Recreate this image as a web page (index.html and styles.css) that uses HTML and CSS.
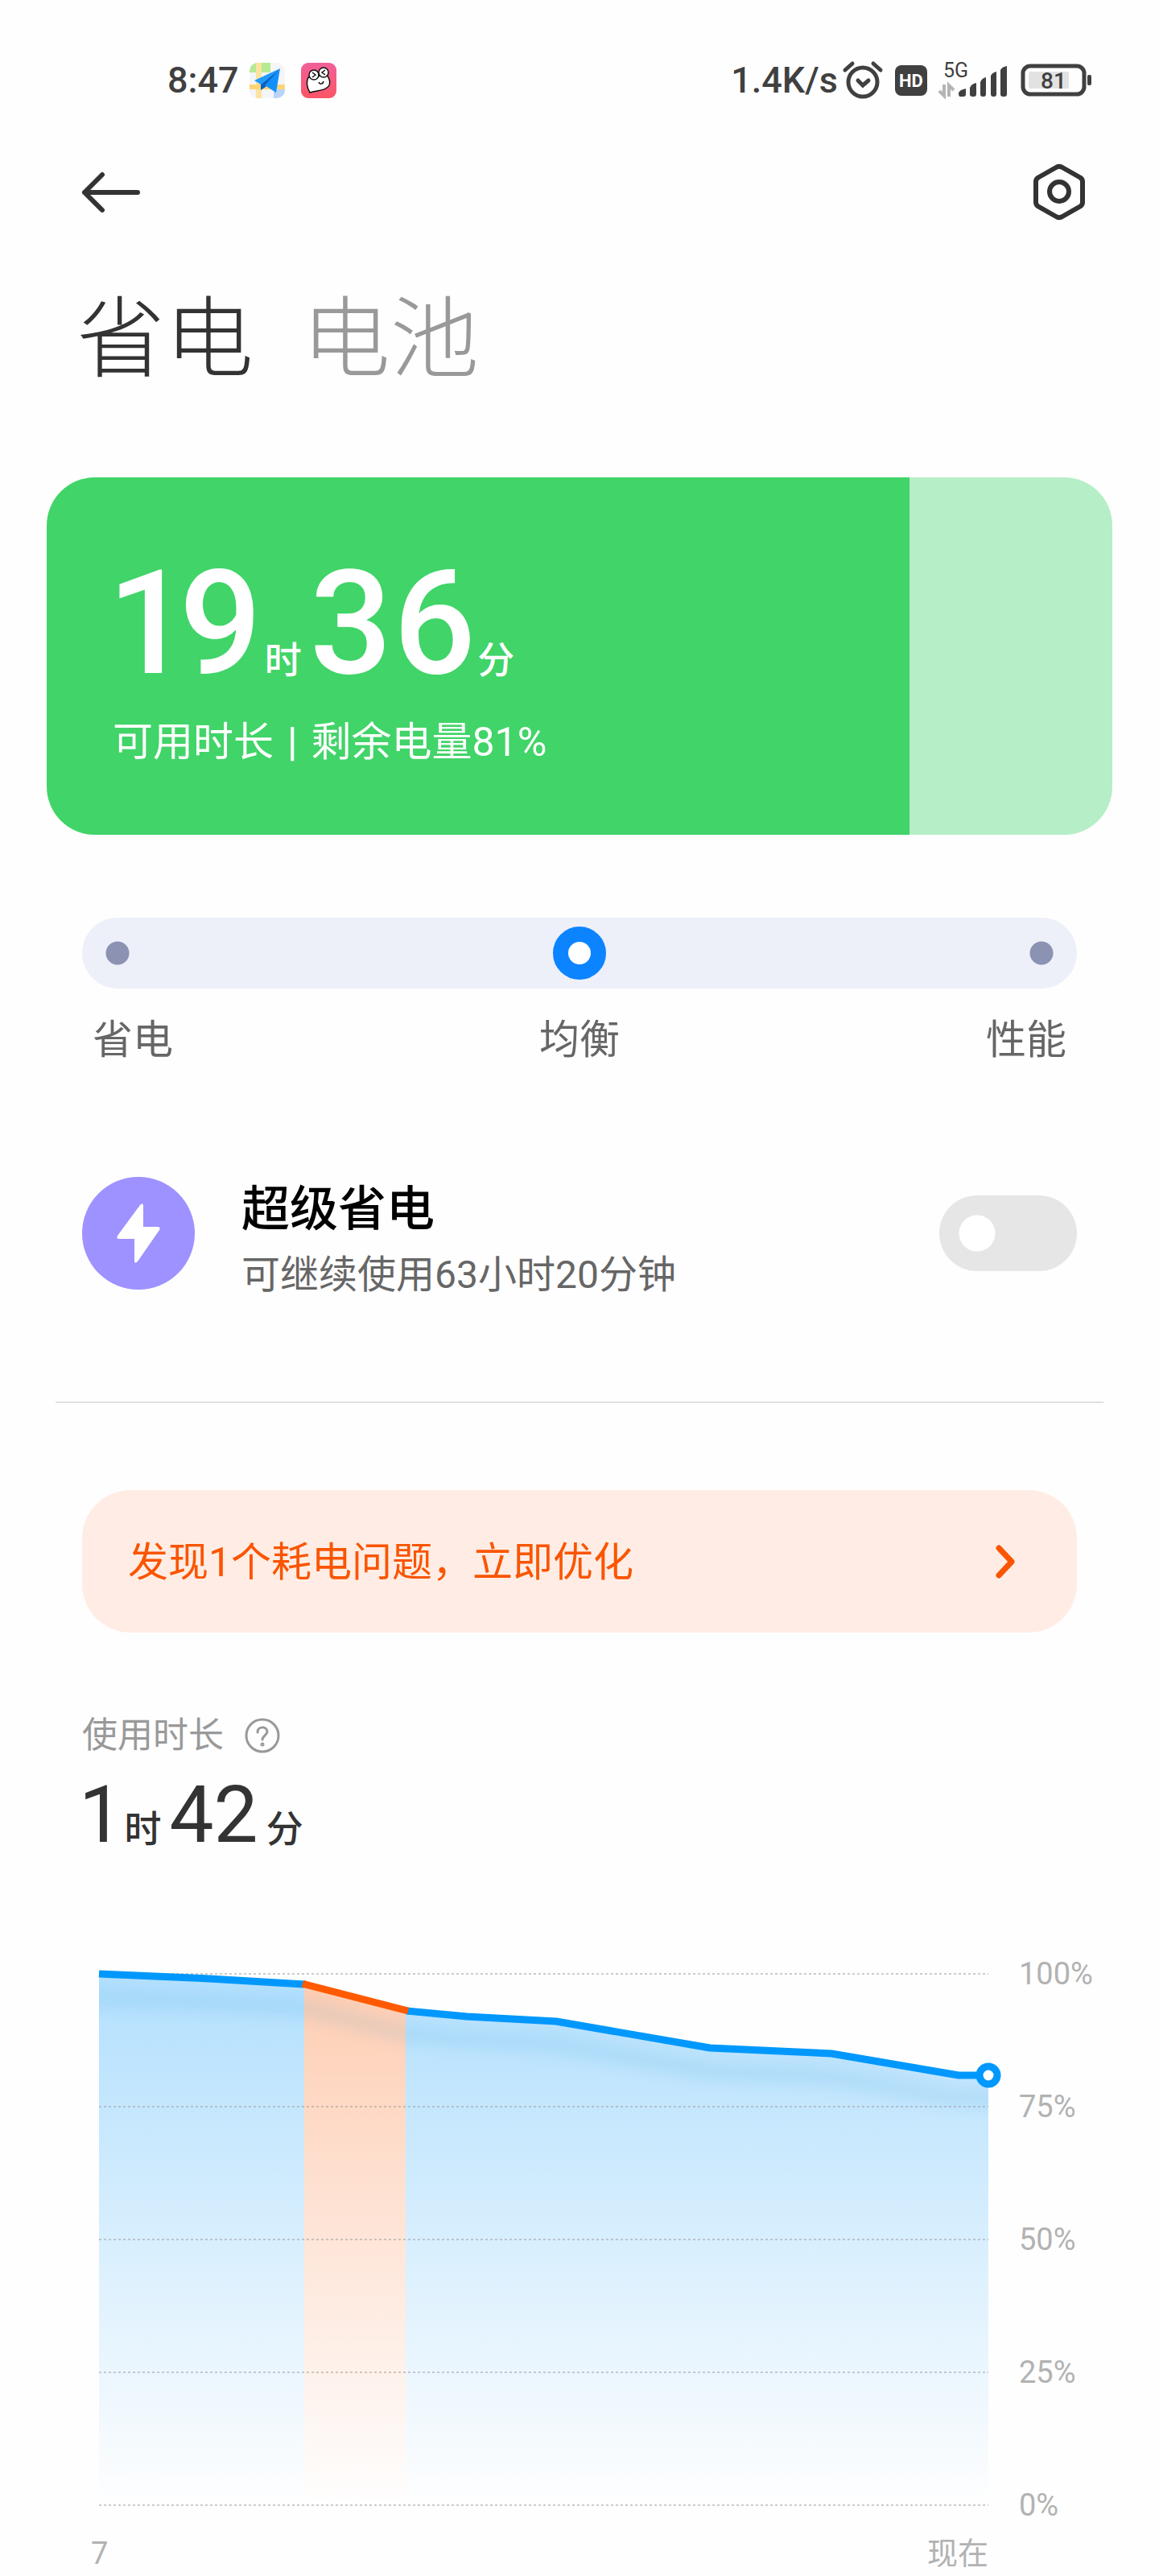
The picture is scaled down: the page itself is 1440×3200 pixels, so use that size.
FILE: index.html
```html
<!DOCTYPE html>
<html lang="zh-CN">
<head>
  <meta charset="UTF-8">
  <meta name="viewport" content="width=device-width, initial-scale=1.0">
  <title>省电</title>
  <link rel="stylesheet" href="styles.css">
</head>
<body>
  <!-- Status bar -->
  <div class="status-bar">
    <div class="status-left">
      <span class="status-text">8:47</span>
      <svg class="app-icon" width="44" height="44" viewBox="0 0 44 44">
        <defs><clipPath id="map-clip"><rect width="44" height="44" rx="10"/></clipPath></defs>
        <g clip-path="url(#map-clip)">
          <rect width="44" height="44" fill="#f4f5f6"/>
          <rect width="26" height="12" fill="#b6ea95"/>
          <path d="M30 44V35q6-3 14-3v12z" fill="#b9d3fb"/>
          <path d="M8 0h7v44H8z" fill="#fde2a0"/>
          <path d="M0 27h44v6H0z" fill="#fdd673"/>
        </g>
        <path d="M38 7L6 22l8 5z" fill="#1e9bff"/>
        <path d="M38 7L14 27v7l6-4z" fill="#0a5fc4"/>
        <path d="M38 7L19 28l14 9z" fill="#1190fb"/>
      </svg>
      <svg class="app-icon" width="44" height="44" viewBox="0 0 44 44">
        <defs>
          <linearGradient id="pink" x1="0" y1="0" x2="0" y2="1">
            <stop offset="0" stop-color="#f0609a"/>
            <stop offset="1" stop-color="#fb5566"/>
          </linearGradient>
        </defs>
        <rect width="44" height="44" rx="9" fill="url(#pink)"/>
        <path d="M9 18C6 25 8 32 11 37c9-3 20-2 24-9 2-5 0-9-3-13z" fill="#fff" stroke="#111" stroke-width="1.5"/>
        <circle cx="16" cy="15" r="6" fill="#fff" stroke="#111" stroke-width="1.5"/>
        <circle cx="28" cy="12" r="6" fill="#fff" stroke="#111" stroke-width="1.5"/>
        <path d="M14 12l4 3-4 3M30 9l-4 3 4 3M22 24c1 3 5 3 6-1" fill="none" stroke="#111" stroke-width="1.5"/>
      </svg>
    </div>
    <div class="status-right">
      <span class="status-text">1.4K/s</span>
      <svg class="alarm" width="50" height="48" viewBox="0 0 50 48" fill="none" stroke="#404040">
        <circle cx="25" cy="26" r="18" stroke-width="5"/>
        <path d="M19 24l6 6 7-6" stroke-width="5" stroke-linecap="round"/>
        <path d="M3 11l9-8M38 3l9 8" stroke-width="5" stroke-linecap="round"/>
      </svg>
      <svg class="hd" width="40" height="38" viewBox="0 0 40 38">
        <rect width="40" height="38" rx="8" fill="#404040"/>
        <text x="20" y="27" class="hd-text">HD</text>
      </svg>
      <svg class="signal" width="84" height="48" viewBox="0 0 84 48">
        <text x="5" y="20" class="net-text">5G</text>
        <path d="M6 29v14L0 37M12 44V30l6 6" fill="none" stroke="#b5b5b5" stroke-width="4"/>
        <g fill="#404040">
          <path d="M24 40q0-4 9-6v7q0 3-3 3h-4q-2 0-2-4z"/>
          <path d="M38 33q2-5 8-6v14q0 3-3 3h-2q-3 0-3-3z"/>
          <path d="M51 26q2-5 7-6v21q0 3-3 3h-1q-3 0-3-3z"/>
          <path d="M64 18q2-4 7-5v28q0 3-3 3h-1q-3 0-3-3z"/>
          <path d="M76 11q2-4 8-5v35q0 3-3 3h-2q-3 0-3-3z"/>
        </g>
      </svg>
      <svg class="battery" width="88" height="40" viewBox="0 0 88 40">
        <rect x="2" y="2" width="76" height="35" rx="9" fill="none" stroke="#404040" stroke-width="5"/>
        <rect x="9" y="9" width="50" height="21" rx="2" fill="#e2e2e2"/>
        <rect x="82" y="13" width="5" height="13" rx="2" fill="#404040"/>
        <text x="40" y="30" class="battery-text">81</text>
      </svg>
    </div>
  </div>

  <header class="toolbar">
    <button class="icon-btn" type="button" aria-label="返回">
      <svg width="72" height="72" viewBox="0 0 72 72" fill="none" stroke="#333" stroke-width="6" stroke-linecap="round" stroke-linejoin="round">
        <path d="M70 37H4M26 15L4 37l22 22"/>
      </svg>
    </button>
    <button class="icon-btn" type="button" aria-label="设置">
      <svg width="64" height="72" viewBox="0 0 64 72" fill="none" stroke="#333" stroke-width="6" stroke-linejoin="round">
        <path d="M29 5.500q3-1.500 6 0l23 13q3 2 3 5v26q0 3-3 5l-23 13q-3 1.500-6 0l-23-13q-3-2-3-5v-26q0-3 3-5z"/>
        <circle cx="32" cy="36" r="12"/>
      </svg>
    </button>
  </header>

  <nav class="tabs">
    <a href="#" class="tab active">省电</a>
    <a href="#" class="tab">电池</a>
  </nav>

  <main>
    <!-- Remaining time -->
    <section class="battery-card">
      <p class="duration duration-large">19<span>时</span>36<span>分</span></p>
      <p class="battery-info">可用时长<span class="bar">|</span>剩余电量81%</p>
    </section>

    <!-- Power mode -->
    <section class="mode">
      <input type="range" class="mode-slider" min="0" max="2" value="1" aria-label="性能模式">
      <div class="mode-labels">
        <span>省电</span>
        <span>均衡</span>
        <span>性能</span>
      </div>
    </section>

    <!-- Ultra saver -->
    <section class="saver">
      <svg class="saver-icon" width="140" height="140" viewBox="0 0 140 140">
        <circle cx="70" cy="70" r="70" fill="#9d92ff"/>
        <path d="M72 35q4-4 4 1v26h18q4 0 2 4L69 105q-4 4-4-1V77H46q-4 0-2-4z" fill="#fff"/>
      </svg>
      <label class="saver-text" for="saver-toggle">
        <strong>超级省电</strong>
        <span>可继续使用63小时20分钟</span>
      </label>
      <input type="checkbox" class="toggle" id="saver-toggle">
    </section>

    <hr class="divider">

    <a href="#" class="alert">
      <span>发现1个耗电问题，立即优化</span>
      <svg width="28" height="44" viewBox="0 0 28 44" fill="none" stroke="#fa5500" stroke-width="7" stroke-linecap="round" stroke-linejoin="round">
        <path d="M5 4l16 17L5 38"/>
      </svg>
    </a>

    <!-- Screen-on time -->
    <section class="usage">
      <div class="usage-title">
        <h2>使用时长</h2>
        <button class="icon-btn" type="button" aria-label="说明">
          <svg width="44" height="44" viewBox="0 0 44 44" fill="none" stroke="#999" stroke-width="3">
            <circle cx="22" cy="22" r="20"/>
            <path d="M16 18c0-8 12-8 12-1 0 5-6 5-6 10" stroke-linecap="round"/>
            <circle cx="22" cy="33" r="1"/>
          </svg>
        </button>
      </div>
      <p class="duration duration-small">1<span>时</span>42<span>分</span></p>
    </section>

    <!-- Battery level chart -->
    <section class="chart">
      <div class="plot">
        <svg viewBox="0 0 1105 660">
          <defs>
            <linearGradient id="blue-fill" gradientUnits="userSpaceOnUse" x1="0" y1="0" x2="0" y2="660">
              <stop offset="0" stop-color="#0098fc" stop-opacity="0.3"/>
              <stop offset="1" stop-color="#0098fc" stop-opacity="0"/>
            </linearGradient>
            <linearGradient id="orange-fill" gradientUnits="userSpaceOnUse" x1="0" y1="0" x2="0" y2="660">
              <stop offset="0" stop-color="#ff5a00" stop-opacity="0.3"/>
              <stop offset="1" stop-color="#ff5a00" stop-opacity="0"/>
            </linearGradient>
            <clipPath id="area">
              <path d="M0 0L137 6 255 13 382 46 457 53 568 59 759 92 910 99 1068 126H1105V660H0z"/>
            </clipPath>
            <filter id="soft" x="-10%" y="-50%" width="120%" height="200%">
              <feGaussianBlur stdDeviation="10"/>
            </filter>
          </defs>
          <path d="M0 0L137 6 255 13V660H0z" fill="url(#blue-fill)"/>
          <path d="M255 13L381 46V660H255z" fill="url(#orange-fill)"/>
          <path d="M381 46L457 53 568 59 759 92 910 99 1068 126H1105V660H381z" fill="url(#blue-fill)"/>
          <g clip-path="url(#area)">
            <path class="line-shadow" d="M-30 29L137 35 255 42 382 75 457 82 568 88 759 121 910 128 1068 155H1140"/>
          </g>
          <path class="grid" d="M0 0H1105M0 165H1105M0 330H1105M0 495H1105M0 660H1105"/>
          <path class="line" d="M0 0L137 6 255 13M382 46L457 53 568 59 759 92 910 99 1068 126H1105"/>
          <path class="line line-hot" d="M253 12L256 13 380 45 384 46"/>
          <circle cx="1105" cy="126" r="11" fill="#fff" stroke="#0098fc" stroke-width="9"/>
        </svg>
        <div class="x-axis">
          <span>7</span>
          <span>现在</span>
        </div>
      </div>
      <div class="y-axis">
        <span>100%</span>
        <span>75%</span>
        <span>50%</span>
        <span>25%</span>
        <span>0%</span>
      </div>
    </section>
  </main>
</body>
</html>
```

FILE: styles.css
```css
/* General Reset */
* {
  margin: 0;
  padding: 0;
  box-sizing: border-box;
  font-family: Roboto, "Noto Sans CJK SC", sans-serif;
}

body {
  background-color: #fefefe;
  color: #333;
}

a {
  text-decoration: none;
}

svg {
  display: block;
  overflow: visible;
}

.icon-btn {
  background: none;
  border: none;
  cursor: pointer;
}

/* Status bar */
.status-bar {
  display: flex;
  justify-content: space-between;
  align-items: center;
  height: 60px;
  margin-top: 70px;
  padding: 0 83px 0 208px;
}

.status-left,
.status-right {
  display: flex;
  align-items: center;
}

.status-text {
  font-size: 45px;
  font-weight: 500;
  line-height: 60px;
  color: #404040;
}

.app-icon {
  margin-left: 13px;
}

.app-icon + .app-icon {
  margin-left: 20px;
}

.alarm {
  margin-left: 6px;
}

.hd,
.signal {
  margin-left: 15px;
}

.battery {
  margin-left: 18px;
}

.hd-text,
.battery-text {
  font-size: 22px;
  font-weight: 700;
  fill: #fff;
  text-anchor: middle;
}

.battery-text {
  font-size: 28px;
  font-weight: 500;
  fill: #404040;
}

.net-text {
  font-size: 25px;
  fill: #404040;
}

/* Toolbar */
.toolbar {
  display: flex;
  justify-content: space-between;
  margin-top: 72px;
  padding: 0 92px 0 101px;
}

.tabs {
  display: flex;
  gap: 60px;
  margin-top: 89px;
  padding: 0 95px;
}

.tab {
  font-size: 110px;
  font-weight: 300;
  line-height: 120px;
  color: #999;
}

.tab.active {
  color: #333;
}

/* Remaining time card */
.battery-card {
  margin: 110px 58px 0;
  padding: 102px 82px 85px;
  border-radius: 60px;
  background: linear-gradient(to right, #41d468 81%, #b5eec7 81%);
  color: #fff;
}

.duration {
  font-variant-numeric: proportional-nums;
}

.duration span {
  margin: 0 10px;
  font-size: 46px;
  font-weight: 500;
  line-height: 50px;
}

.duration-large {
  font-size: 180px;
  font-weight: 500;
  line-height: 160px;
}

.duration-large span {
  margin: 0 10px 0 2px;
}

.duration-small {
  margin-top: 23px;
  font-size: 98px;
  line-height: 100px;
}

.battery-info {
  margin-top: 37px;
  font-size: 50px;
  line-height: 60px;
}

.bar {
  margin: 0 17px;
  font-weight: 500;
}

/* Power mode slider */
.mode {
  margin: 103px 102px 0;
}

.mode-slider {
  display: block;
  width: 100%;
  height: 88px;
  padding: 0 11px;
  border-radius: 44px;
  background:
    radial-gradient(circle at 44px 44px, #8c92b2 14px, transparent 15px),
    radial-gradient(circle at calc(100% - 44px) 44px, #8c92b2 14px, transparent 15px),
    #edf0f9;
  appearance: none;
  -webkit-appearance: none;
  cursor: pointer;
}

.mode-slider::-webkit-slider-thumb {
  -webkit-appearance: none;
  width: 66px;
  height: 66px;
  border: 19px solid #0d84ff;
  border-radius: 50%;
  background-color: #fff;
}

.mode-labels {
  display: flex;
  justify-content: space-between;
  margin-top: 34px;
  padding: 0 13px;
  font-size: 50px;
  line-height: 60px;
  color: #666;
}

/* Ultra saver row */
.saver {
  display: flex;
  align-items: center;
  margin: 130px 102px 0;
}

.saver-text {
  display: flex;
  flex: 1;
  flex-direction: column;
  gap: 20px;
  margin-left: 58px;
  padding-top: 18px;
}

.saver-text strong {
  font-size: 60px;
  font-weight: 500;
  line-height: 66px;
  color: #000;
}

.saver-text span {
  font-size: 48px;
  line-height: 56px;
  color: #666;
}

.toggle {
  width: 171px;
  height: 94px;
  border-radius: 47px;
  background: radial-gradient(circle at 47px 47px, #fff 22px, transparent 23px) #e6e6e6;
  appearance: none;
  -webkit-appearance: none;
  cursor: pointer;
}

.toggle:checked {
  background: radial-gradient(circle at 124px 47px, #fff 22px, transparent 23px) #0d84ff;
}

.divider {
  margin: 129px 69px 0;
  border: none;
  border-top: 2px solid #e0e0e0;
}

/* Power issue banner */
.alert {
  display: flex;
  justify-content: space-between;
  align-items: center;
  height: 177px;
  margin: 108px 102px 0;
  padding: 3px 74px 0 57px;
  border-radius: 60px;
  background-color: #ffede5;
  color: #fa5500;
  font-size: 50px;
  line-height: 60px;
}

/* Usage time */
.usage {
  margin: 102px 102px 0;
}

.usage-title {
  display: flex;
  align-items: center;
  gap: 26px;
}

.usage-title h2 {
  font-size: 44px;
  font-weight: 400;
  line-height: 52px;
  color: #999;
}

/* Battery level chart */
.chart {
  display: flex;
  gap: 38px;
  margin-top: 127px;
  padding: 0 81px 0 123px;
  color: #b2b2b2;
  font-size: 38px;
}

.plot {
  flex: 1;
  padding-top: 20px;
}

.plot svg {
  width: 100%;
}

.x-axis {
  display: flex;
  justify-content: space-between;
  margin-top: 38px;
  margin-left: -10px;
  line-height: 44px;
}

.y-axis {
  display: flex;
  flex-direction: column;
  justify-content: space-between;
  width: 93px;
  margin-bottom: 62px;
  line-height: 40px;
}

.grid {
  stroke: #999;
  stroke-width: 1;
  stroke-dasharray: 3 3;
}

.line {
  fill: none;
  stroke: #0098fc;
  stroke-width: 9;
  stroke-linejoin: round;
}

.line-hot {
  stroke: #ff5a00;
}

.line-shadow {
  fill: none;
  stroke: #0087c8;
  stroke-width: 16;
  opacity: 0.12;
  filter: url(#soft);
}
```
